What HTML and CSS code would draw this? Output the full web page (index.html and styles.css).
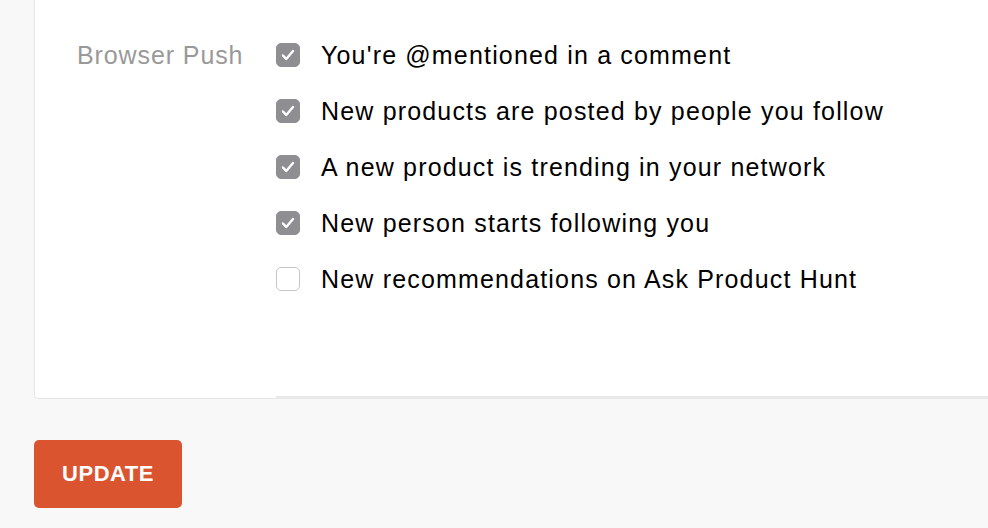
FILE: index.html
```html
<!DOCTYPE html>
<html>
<head>
<meta charset="utf-8">
<link rel="stylesheet" href="styles.css">
</head>
<body>
<div class="page">
  <div class="card">
    <div class="label-col">
      <div class="label">Browser Push</div>
    </div>
    <ul class="options">
      <li class="option"><span class="box checked"><svg viewBox="0 0 24 24"><path d="M6.5 12.5l3.6 3.8 7.4-8.6"/></svg></span><span class="text">You're @mentioned in a comment</span></li>
      <li class="option"><span class="box checked"><svg viewBox="0 0 24 24"><path d="M6.5 12.5l3.6 3.8 7.4-8.6"/></svg></span><span class="text">New products are posted by people you follow</span></li>
      <li class="option"><span class="box checked"><svg viewBox="0 0 24 24"><path d="M6.5 12.5l3.6 3.8 7.4-8.6"/></svg></span><span class="text">A new product is trending in your network</span></li>
      <li class="option"><span class="box checked"><svg viewBox="0 0 24 24"><path d="M6.5 12.5l3.6 3.8 7.4-8.6"/></svg></span><span class="text">New person starts following you</span></li>
      <li class="option"><span class="box"></span><span class="text">New recommendations on Ask Product Hunt</span></li>
    </ul>
  </div>
  <button class="update">UPDATE</button>
</div>
</body>
</html>
```
FILE: styles.css
```css
html, body {
  margin: 0;
  padding: 0;
  background: #f8f8f8;
}
body {
  font-family: "Liberation Sans", Arial, sans-serif;
  width: 988px;
  height: 528px;
  overflow: hidden;
}
.page {
  padding-left: 34px;
}
.card {
  display: flex;
  background: #fff;
  border: 1px solid #e6e6e6;
  border-top: none;
  border-right: none;
  border-radius: 0 0 0 4px;
  padding-top: 27px;
}
.label-col {
  width: 241px;
  flex: none;
}
.label {
  height: 56px;
  display: flex;
  align-items: center;
  padding-left: 42px;
  font-size: 25px;
  letter-spacing: 0.9px;
  color: #999;
}
.options {
  flex: 1;
  list-style: none;
  margin: 0;
  padding: 0 0 89px 0;
  border-bottom: 3px solid #e8e8e8;
  margin-bottom: -1px;
}
.option {
  height: 56px;
  display: flex;
  align-items: center;
  gap: 21px;
}
.box {
  width: 24px;
  height: 24px;
  box-sizing: border-box;
  border-radius: 5px;
  border: 1px solid #c6c6c6;
  background: #fff;
  flex: none;
  display: flex;
}
.box.checked {
  background: #8f8e93;
  border-color: #8f8e93;
}
.box svg {
  width: 22px;
  height: 22px;
  fill: none;
  stroke: #fff;
  stroke-width: 2.6;
  stroke-linecap: round;
  stroke-linejoin: round;
}
.text {
  font-size: 25px;
  letter-spacing: 1.17px;
  color: #000;
}
.update {
  margin-top: 41px;
  width: 148px;
  height: 68px;
  border: none;
  border-radius: 5px;
  background: #da552f;
  color: #fff;
  font-family: "Liberation Sans", Arial, sans-serif;
  font-weight: bold;
  font-size: 22px;
  letter-spacing: 0.5px;
  padding: 0;
  display: block;
}
```
